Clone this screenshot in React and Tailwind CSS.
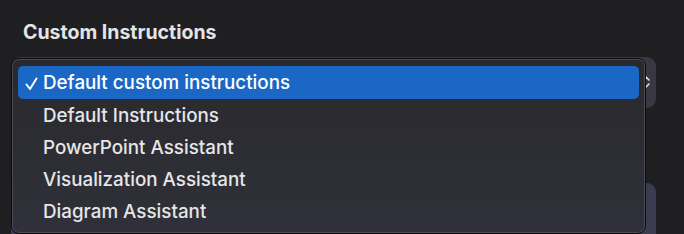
import React from "react";

const items = [
  "Default Instructions",
  "PowerPoint Assistant",
  "Visualization Assistant",
  "Diagram Assistant",
];

export default function App() {
  return (
    <div
      className="relative w-[684px] h-[234px] overflow-hidden bg-[#1f1f21] text-[#e6e6e8]"
      style={{ fontFamily: "Inter, 'Noto Sans', sans-serif" }}
    >
      <div className="pl-[23px] pt-[20px] text-[19.5px] font-bold leading-[24px] text-[#e4e4e6]">
        Custom Instructions
      </div>
      <div className="flex flex-col gap-[75px] pl-[11px] pt-[13px] w-[656px]">
        <div className="relative h-[51px] rounded-[9px] bg-[#383843]">
          <svg className="absolute right-[6px] top-[18px]" width="8" height="14" viewBox="0 0 8 14">
            <path d="M1 5 L4 2 L7 5 M1 9 L4 12 L7 9" fill="none" stroke="#e8e8ea" strokeWidth="1.5" strokeLinecap="round" strokeLinejoin="round" />
          </svg>
        </div>
        <div className="h-[60px] rounded-[9px] bg-[#3c3c50]" />
      </div>

      <div className="absolute left-[11px] top-[58px] w-[635px] h-[176px] rounded-[8px] border border-[#0b0b0d] bg-gradient-to-b from-[#29292d] to-[#30303a] shadow-[inset_0_0_0_1px_#4b4b52] px-[6px] pt-[7px]">
        <div className="flex h-[33px] items-center rounded-[5px] bg-[#1b67c6] pl-[7px] pt-[2px] text-[18.8px] font-medium text-white">
          <svg className="mr-[5px]" width="13" height="14" viewBox="0 0 13 14">
            <path d="M1.5 7.5 L5 12 L11.5 1.5" fill="none" stroke="#ffffff" strokeWidth="2" strokeLinecap="round" strokeLinejoin="round" />
          </svg>
          <span>Default custom instructions</span>
        </div>
        {items.map((t) => (
          <div key={t} className="flex h-[32px] items-center pl-[25px] pt-[2px] text-[18.8px] font-medium">
            {t}
          </div>
        ))}
      </div>
    </div>
  );
}
